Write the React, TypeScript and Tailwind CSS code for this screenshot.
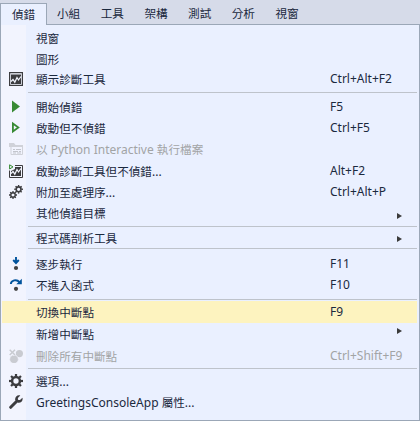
import type { ReactNode } from 'react';

const dark = '#3c3c3f';

function ChartIcon({ small = false }: { small?: boolean }) {
  return (
    <svg width="14" height="14" viewBox="0 0 14 14" className="block">
      {small ? (
        <>
          <path d="M6 1.5H13.5V13.5H.5V6.5" fill="none" stroke={dark} />
          <path d="M6 3H12V12H2V7L6 5Z" fill={dark} />
          <path d="M.6 .8L4 2.9L.6 5Z" fill="#f0f4fb" stroke="#388a34" />
        </>
      ) : (
        <>
          <rect x=".6" y=".6" width="12.8" height="12.8" fill="#eef1fb" stroke={dark} strokeWidth="1.2" />
          <rect x="2" y="2.5" width="10" height="9.5" fill={dark} />
        </>
      )}
      <path d="M2 9.5L4 7.5L5.8 10.2L8 5.5L9.5 8L12 4.5" fill="none" stroke="#f4f6ff" strokeWidth="1.2" />
    </svg>
  );
}

function PlayIcon({ hollow = false }: { hollow?: boolean }) {
  return (
    <svg width="14" height="14" viewBox="0 0 14 14" className="block">
      {hollow ? (
        <path d="M3.9 2.6L9.3 6.5L3.9 10.4Z" fill="none" stroke="#388a34" strokeWidth="1.8" />
      ) : (
        <path d="M3 .5L11 6.5L3 12.5Z" fill="#388a34" />
      )}
    </svg>
  );
}

function ScriptIcon() {
  return (
    <svg width="14" height="14" viewBox="0 0 14 14" className="block">
      <path d="M0 1H5L6.5 3H14V5H0Z" fill="#d0d2d9" />
      <path d="M2 4V12.5H13.5V4" fill="none" stroke="#d0d2d9" />
      <path d="M4 7.5H6M7 7.5H12M4 9.5H9M10 9.5H12M4 11H7M8 11H12" stroke="#c3c5cc" />
    </svg>
  );
}

function Gear({ cx, cy, r }: { cx: number; cy: number; r: number }) {
  return (
    <g transform={`translate(${cx} ${cy})`} stroke={dark} fill="none">
      <circle r={r * 0.56} strokeWidth={r * 0.36} />
      {[0, 45, 90, 135, 180, 225, 270, 315].map((a) => (
        <path key={a} d={`M0 ${-r * 0.65}V${-r}`} strokeWidth={r * 0.32} transform={`rotate(${a})`} />
      ))}
    </g>
  );
}

function GearsIcon() {
  return (
    <svg width="14" height="14" viewBox="0 0 14 14" className="block">
      <Gear cx={9.6} cy={4.3} r={4.3} />
      <Gear cx={4} cy={10} r={4} />
    </svg>
  );
}

function GearIcon() {
  return (
    <svg width="14" height="14" viewBox="0 0 14 14" className="block">
      <Gear cx={7} cy={7} r={7} />
    </svg>
  );
}

function StepIntoIcon() {
  return (
    <svg width="14" height="14" viewBox="0 0 14 14" className="block">
      <path d="M7 0V5M4.2 3L7 6L9.8 3" fill="none" stroke="#00539c" strokeWidth="1.9" />
      <circle cx="7" cy="11" r="2.1" fill="#424242" />
    </svg>
  );
}

function StepOverIcon() {
  return (
    <svg width="14" height="14" viewBox="0 0 14 14" className="block">
      <path d="M1.8 6C2.2 2.5 7.5 .6 10.5 4.2" fill="none" stroke="#00539c" strokeWidth="1.9" />
      <path d="M12.8 .8V6.3H7.3Z" fill="#00539c" />
      <circle cx="7" cy="10.8" r="2.1" fill="#424242" />
    </svg>
  );
}

function BreakpointsIcon() {
  return (
    <svg width="14" height="14" viewBox="0 0 14 14" className="block">
      <circle cx="10.4" cy="4.6" r="3.6" fill="#c9cbd1" />
      <circle cx="5" cy="10.2" r="4.3" fill="#c9cbd1" stroke="#f2f4fd" strokeWidth=".6" />
      <path d="M.7 .7L6 6M6 .7L.7 6" stroke="#f2f4fd" strokeWidth="3" />
      <path d="M.7 .7L6 6M6 .7L.7 6" stroke="#c9cbd1" strokeWidth="1.5" />
    </svg>
  );
}

function WrenchIcon() {
  return (
    <svg width="14" height="14" viewBox="0 0 14 14" className="block">
      <path d="M1.7 12.3L8.2 5.8" stroke={dark} strokeWidth="3" strokeLinecap="round" />
      <path d="M11.3 .6L8.9 3V5.1H11L13.4 2.7C14.3 5.2 12.2 8.3 9 7.8L6.2 5C5.7 2 8.5-.5 11.3 .6Z" fill={dark} />
    </svg>
  );
}

type RowProps = {
  label: string;
  h: string;
  keys?: string;
  icon?: ReactNode;
  arrow?: string;
  disabled?: boolean;
  active?: boolean;
};

// Splits a caption so that Latin and Chinese runs get their own metrics.
function Caption({ text }: { text: string }) {
  return (
    <>
      {text.split(/([\u4e00-\u9fff]+)/).filter(Boolean).map((part, i) =>
        /[\u4e00-\u9fff]/.test(part) ? (
          <span key={i} className="text-[11.6px]">{part}</span>
        ) : (
          <span key={i} className="text-[12px]">{part}</span>
        ),
      )}
    </>
  );
}

function Row({ label, h, keys, icon, arrow, disabled, active }: RowProps) {
  return (
    <div className={`ml-px mr-[2px] flex items-center whitespace-pre ${h} ${active ? 'bg-[#fdf3bf]' : ''} ${disabled ? 'text-[#a2a4a5]' : ''}`}>
      <div className="w-[34px] shrink-0 pl-[7px]">{icon}</div>
      <div className="w-[294px] shrink-0 leading-5"><Caption text={label} /></div>
      <div className="w-[67px] shrink-0 text-[12px] leading-5">{keys}</div>
      {arrow && (
        <svg width="5" height="6" viewBox="0 0 5 6" className={arrow}>
          <path d="M0 0L5 3L0 6Z" fill="#3b3b3b" />
        </svg>
      )}
    </div>
  );
}

function Separator({ space }: { space: string }) {
  return <div className={`ml-[27px] mr-[2px] h-px bg-[#bec3cb] ${space}`} />;
}

export default function App() {
  return (
    <div
      className="flex h-[421px] w-[420px] flex-col overflow-hidden bg-[#d6dbe9] text-[#1b293e]"
      style={{ fontFamily: '"Noto Sans", "Noto Sans CJK TC", sans-serif' }}
    >
      <nav className="flex h-[25px] shrink-0 pt-[3px] text-[11.6px] leading-[21px]">
        <div className="w-[47px] border border-b-0 border-[#9ba7b7] bg-[#eaf0ff] pl-[11px]">偵錯</div>
        <div className="flex flex-1 border-b border-[#9ba7b7] pl-[10px]">
          {['小組', '工具', '架構', '測試', '分析', '視窗'].map((m) => (
            <div key={m} className="w-[43.7px]">{m}</div>
          ))}
        </div>
      </nav>
      <main className="h-[396px] border border-t-0 border-[#9ba7b7] bg-[linear-gradient(to_right,#f2f4fe_25px,#eaf0ff_25px)] pt-[2px]">
        <Row h="h-[21px]" label="視窗" arrow="" />
        <Row h="h-[21px]" label="圖形" arrow="" />
        <Row h="h-[20px]" label="顯示診斷工具" keys="Ctrl+Alt+F2" icon={<ChartIcon />} />
        <Separator space="mt-[3px] mb-[3px]" />
        <Row h="h-[21px]" label="開始偵錯" keys="F5" icon={<PlayIcon />} />
        <Row h="h-[21px]" label="啟動但不偵錯" keys="Ctrl+F5" icon={<PlayIcon hollow />} />
        <Row h="h-[22px]" label="以 Python Interactive 執行檔案" icon={<ScriptIcon />} disabled />
        <Row h="h-[21px]" label="啟動診斷工具但不偵錯..." keys="Alt+F2" icon={<ChartIcon small />} />
        <Row h="h-[22px]" label="附加至處理序..." keys="Ctrl+Alt+P" icon={<GearsIcon />} />
        <Row h="h-[19px]" label="其他偵錯目標" arrow="mt-[7px]" />
        <Separator space="mt-[4px] mb-[1px]" />
        <Row h="h-[20px]" label="程式碼剖析工具" arrow="mt-px" />
        <Separator space="mb-[4px]" />
        <Row h="h-[21px]" label="逐步執行" keys="F11" icon={<StepIntoIcon />} />
        <Row h="h-[22px]" label="不進入函式" keys="F10" icon={<StepOverIcon />} />
        <Separator space="mt-[3px] mb-[1px]" />
        <Row h="h-[22px]" label="切換中斷點" keys="F9" active />
        <Row h="h-[22px]" label="新增中斷點" arrow="mb-[7px]" />
        <Row h="h-[22px]" label="刪除所有中斷點" keys="Ctrl+Shift+F9" icon={<BreakpointsIcon />} disabled />
        <Separator space="mt-[1px] mb-[1px]" />
        <Row h="h-[21px]" label="選項..." icon={<GearIcon />} />
        <Row h="h-[22px]" label="GreetingsConsoleApp 屬性..." icon={<WrenchIcon />} />
      </main>
    </div>
  );
}
